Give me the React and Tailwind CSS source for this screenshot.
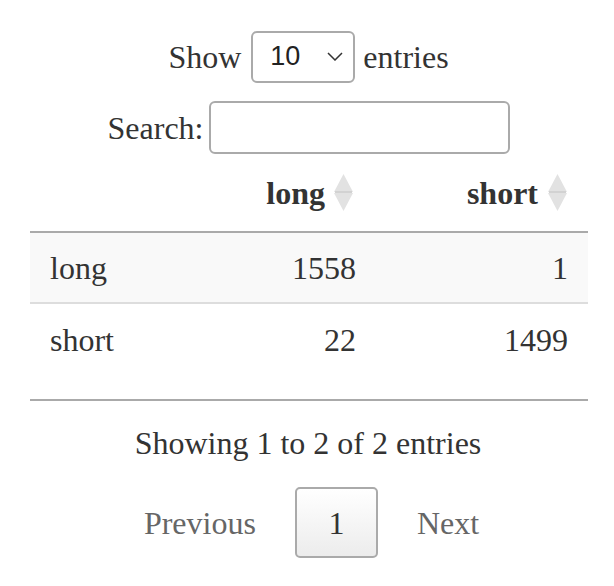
import React from "react";

function SortIcon() {
  return (
    <svg width="19" height="37" viewBox="0 0 19 37" className="shrink-0">
      <polygon points="9.5,0 19,18 0,18" fill="#e2e2e2" />
      <polygon points="0,19 19,19 9.5,37" fill="#e2e2e2" />
      <rect x="1" y="17" width="17" height="2" fill="#d2d2d2" />
    </svg>
  );
}

export default function App() {
  return (
    <div className="w-[614px] h-[586px] bg-white text-[#333] text-[32px] leading-none" style={{ fontFamily: '"Liberation Serif", "Times New Roman", serif' }}>
      {/* Show entries */}
      <div className="pt-[31px] flex items-center justify-center h-[82px]">
        <span className="ml-[3px]">Show</span>
        <div className="ml-[10px] w-[104px] h-[52px] border-2 border-[#aaa] rounded-[6px] flex items-center pl-[17px] pr-[6px] justify-between" style={{ fontFamily: '"Liberation Sans", Arial, sans-serif' }}>
          <span className="text-[27px] text-[#222]">10</span>
          <svg width="16" height="9" viewBox="0 0 16 9" className="mr-[4px]">
            <polyline points="1,1 8,8 15,1" fill="none" stroke="#333" strokeWidth="1.5" />
          </svg>
        </div>
        <span className="ml-[8px]">entries</span>
      </div>
      {/* Search */}
      <div className="mt-[19px] h-[53px] flex items-center justify-center pl-[4px]">
        <span>Search:</span>
        <div className="ml-[6px] w-[301px] h-[53px] border-2 border-[#aaa] rounded-[6px] bg-white" />
      </div>
      {/* Table */}
      <div className="ml-[30px] w-[558px]">
        <div className="grid grid-cols-[166px_180px_212px] h-[79px] border-b-2 border-[#aaa] font-bold items-center">
          <div />
          <div className="flex items-center justify-end pr-[23px] gap-[9px]">
            <span>long</span>
            <SortIcon />
          </div>
          <div className="flex items-center justify-end pr-[21px] gap-[10px]">
            <span>short</span>
            <SortIcon />
          </div>
        </div>
        <div className="grid grid-cols-[166px_180px_212px] h-[71px] bg-[#f9f9f9] border-b-2 border-[#ddd] items-center">
          <div className="pl-[20px]">long</div>
          <div className="text-right pr-[20px]">1558</div>
          <div className="text-right pr-[20px]">1</div>
        </div>
        <div className="grid grid-cols-[166px_180px_212px] h-[71px] items-center">
          <div className="pl-[20px]">short</div>
          <div className="text-right pr-[20px]">22</div>
          <div className="text-right pr-[20px]">1499</div>
        </div>
        <div className="h-[26px] border-b-2 border-[#aaa]" />
      </div>
      {/* Info */}
      <div className="mt-[22px] h-[40px] flex items-center justify-center pl-[2px]">
        Showing 1 to 2 of 2 entries
      </div>
      {/* Pagination */}
      <div className="mt-[24px] flex items-center justify-center gap-[39px] pl-[9px]">
        <span className="text-[#666]">Previous</span>
        <div className="w-[83px] h-[71px] border-2 border-[#aaa] rounded-[5px] flex items-center justify-center text-[#333]" style={{ background: "linear-gradient(to bottom, #fff 0%, #ececec 100%)" }}>
          1
        </div>
        <span className="text-[#666]">Next</span>
      </div>
    </div>
  );
}
